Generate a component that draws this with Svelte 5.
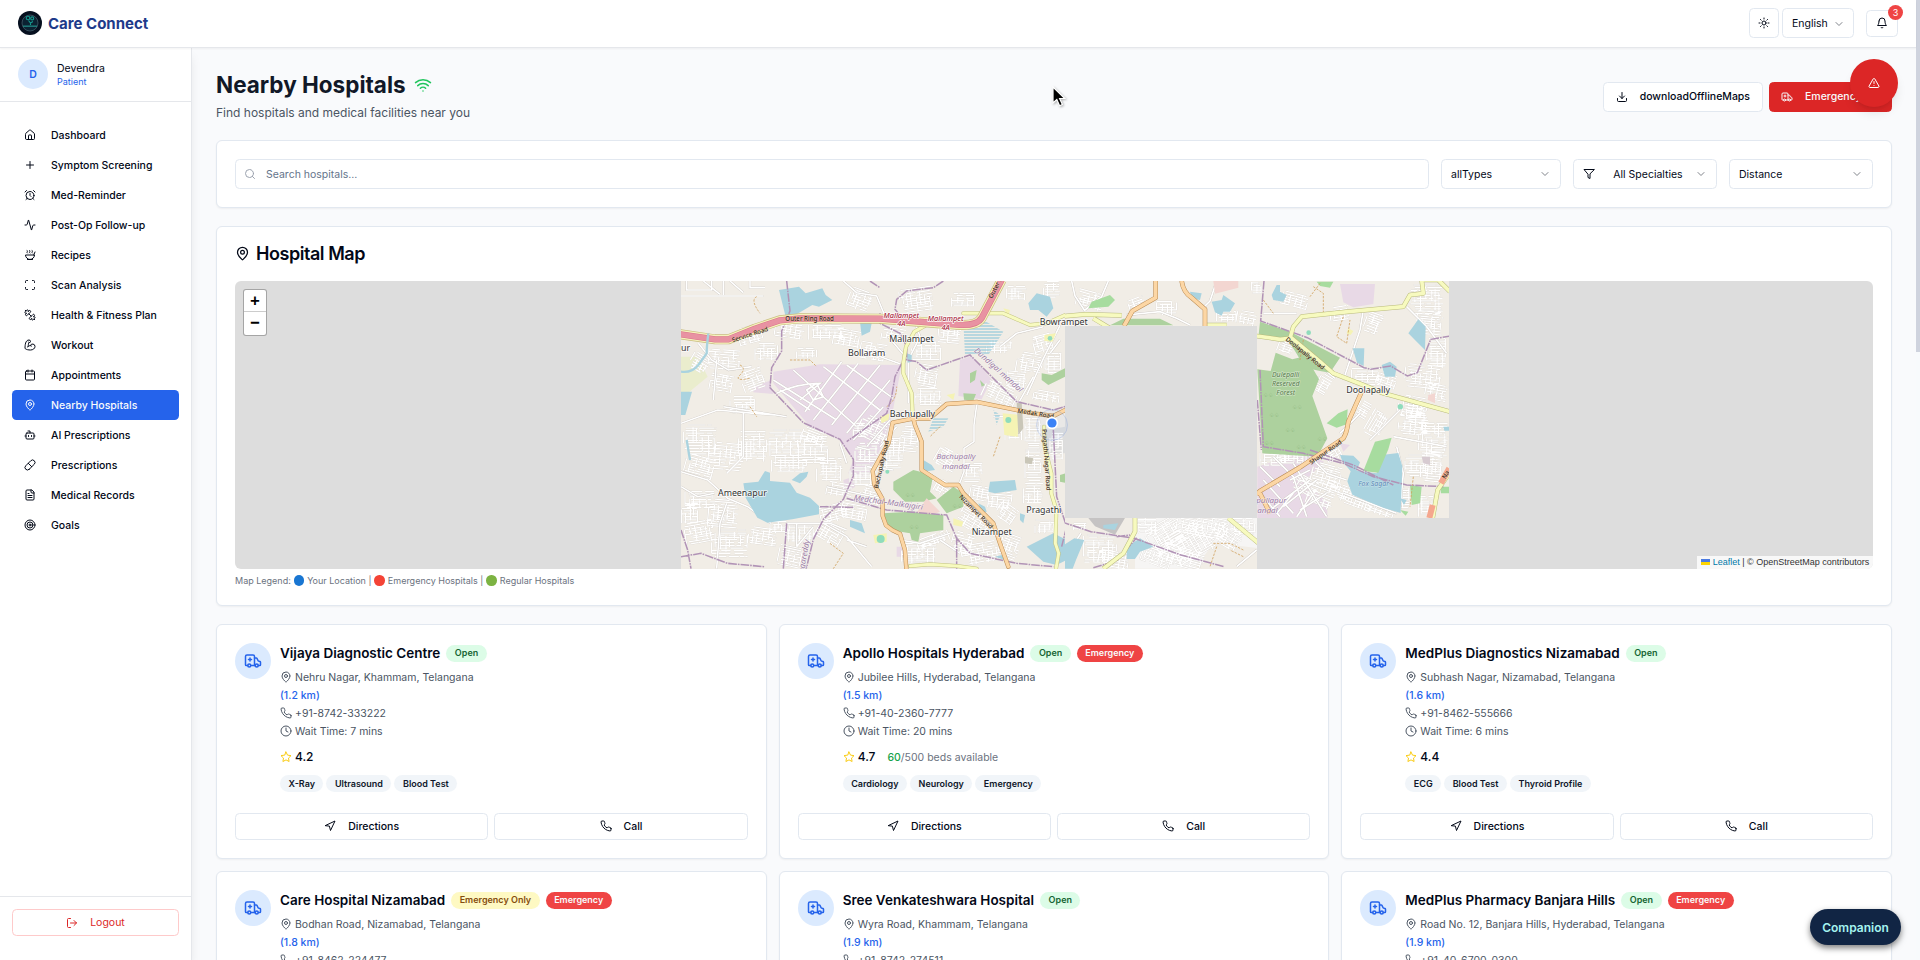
<script>
  const icons = {
    home: '<path d="M15 21v-8a1 1 0 0 0-1-1h-4a1 1 0 0 0-1 1v8"/><path d="M3 10a2 2 0 0 1 .709-1.528l7-5.999a2 2 0 0 1 2.582 0l7 5.999A2 2 0 0 1 21 10v9a2 2 0 0 1-2 2H5a2 2 0 0 1-2-2z"/>',
    plus: '<path d="M5 12h14M12 5v14"/>',
    alarm: '<circle cx="12" cy="13" r="8"/><path d="M12 9v4l2 2M5 3 2 6M22 6l-3-3M6.38 18.7 4 21M17.64 18.67 20 21"/>',
    activity: '<path d="M22 12h-2.48a2 2 0 0 0-1.93 1.46l-2.35 8.36a.25.25 0 0 1-.48 0L9.24 2.18a.25.25 0 0 0-.48 0l-2.35 8.36A2 2 0 0 1 4.49 12H2"/>',
    soup: '<path d="M12 21a9 9 0 0 0 9-9H3a9 9 0 0 0 9 9Z"/><path d="M7 21h10M19.5 12 22 6"/><path d="M16.25 3c.27.1.8.53.75 1.36-.06.83-.93 1.2-1 2.02-.05.78.34 1.24.73 1.62M11.25 3c.27.1.8.53.74 1.36-.05.83-.93 1.2-.98 2.02-.06.78.33 1.24.72 1.62M6.25 3c.27.1.8.53.75 1.36-.06.83-.93 1.2-1 2.02-.05.78.34 1.24.74 1.62"/>',
    scan: '<path d="M3 7V5a2 2 0 0 1 2-2h2M17 3h2a2 2 0 0 1 2 2v2M21 17v2a2 2 0 0 1-2 2h-2M7 21H5a2 2 0 0 1-2-2v-2"/>',
    dumbbell: '<path d="M14.4 14.4 9.6 9.6"/><path d="M18.657 21.485a2 2 0 1 1-2.829-2.828l-1.767 1.768a2 2 0 1 1-2.829-2.829l6.364-6.364a2 2 0 1 1 2.829 2.829l-1.768 1.767a2 2 0 1 1 2.828 2.829z"/><path d="m21.5 21.5-1.4-1.4M3.9 3.9 2.5 2.5"/><path d="M6.404 12.768a2 2 0 1 1-2.829-2.829l1.768-1.767a2 2 0 1 1-2.828-2.829l2.828-2.828a2 2 0 1 1 2.829 2.828l1.767-1.768a2 2 0 1 1 2.829 2.829z"/>',
    biceps: '<path d="M12.409 13.017A5 5 0 0 1 22 15c0 3.866-4 7-9 7-4.077 0-8.153-.82-10.371-2.462-.426-.316-.631-.832-.62-1.362C2.118 12.723 2.627 2 10 2a3 3 0 0 1 3 3 2 2 0 0 1-2 2c-1.105 0-1.64-.444-2-1"/><path d="M15 14a5 5 0 0 0-7.584 2M9.964 6.825C8.019 7.977 9.5 13 8 15"/>',
    calendar: '<path d="M8 2v4M16 2v4M3 10h18"/><rect x="3" y="4" width="18" height="18" rx="2"/>',
    pin: '<path d="M20 10c0 4.993-5.539 10.193-7.399 11.799a1 1 0 0 1-1.202 0C9.539 20.193 4 14.993 4 10a8 8 0 0 1 16 0"/><circle cx="12" cy="10" r="3"/>',
    bot: '<path d="M12 8V4H8"/><rect x="4" y="8" width="16" height="12" rx="2"/><path d="M2 14h2M20 14h2M15 13v2M9 13v2"/>',
    pill: '<path d="m10.5 20.5 10-10a4.95 4.95 0 1 0-7-7l-10 10a4.95 4.95 0 1 0 7 7Z"/><path d="m8.5 8.5 7 7"/>',
    file: '<path d="M15 2H6a2 2 0 0 0-2 2v16a2 2 0 0 0 2 2h12a2 2 0 0 0 2-2V7Z"/><path d="M14 2v4a2 2 0 0 0 2 2h4M10 9H8M16 13H8M16 17H8"/>',
    target: '<circle cx="12" cy="12" r="10"/><circle cx="12" cy="12" r="6"/><circle cx="12" cy="12" r="2"/>',
    logout: '<path d="M9 21H5a2 2 0 0 1-2-2V5a2 2 0 0 1 2-2h4"/><path d="m16 17 5-5-5-5M21 12H9"/>',
    sun: '<circle cx="12" cy="12" r="4"/><path d="M12 2v2M12 20v2M4.93 4.93l1.41 1.41M17.66 17.66l1.41 1.41M2 12h2M20 12h2M6.34 17.66l-1.41 1.41M19.07 4.93l-1.41 1.41"/>',
    chevron: '<path d="m6 9 6 6 6-6"/>',
    bell: '<path d="M6 8a6 6 0 0 1 12 0c0 7 3 9 3 9H3s3-2 3-9"/><path d="M10.3 21a1.94 1.94 0 0 0 3.4 0"/>',
    download: '<path d="M21 15v4a2 2 0 0 1-2 2H5a2 2 0 0 1-2-2v-4M7 10l5 5 5-5M12 15V3"/>',
    ambulance: '<path d="M10 10H6M8 8v4M9 18h6"/><path d="M14 18V6a2 2 0 0 0-2-2H4a2 2 0 0 0-2 2v11a1 1 0 0 0 1 1h2"/><path d="M19 18h2a1 1 0 0 0 1-1v-3.28a1 1 0 0 0-.684-.948l-1.923-.641a1 1 0 0 1-.578-.502l-1.539-3.076A1 1 0 0 0 16.382 8H14"/><circle cx="17" cy="18" r="2"/><circle cx="7" cy="18" r="2"/>',
    alert: '<path d="m21.73 18-8-14a2 2 0 0 0-3.48 0l-8 14A2 2 0 0 0 4 21h16a2 2 0 0 0 1.73-3"/><path d="M12 9v4M12 17h.01"/>',
    wifi: '<path d="M12 20h.01M2 8.82a15 15 0 0 1 20 0M5 12.859a10 10 0 0 1 14 0M8.5 16.429a5 5 0 0 1 7 0"/>',
    filter: '<path d="M22 3H2l8 9.46V19l4 2v-8.54z"/>',
    search: '<circle cx="11" cy="11" r="8"/><path d="m21 21-4.3-4.3"/>',
    nav: '<path d="M3 11 22 2l-9 19-2-8z"/>',
    phone: '<path d="M22 16.92v3a2 2 0 0 1-2.18 2 19.79 19.79 0 0 1-8.63-3.07 19.5 19.5 0 0 1-6-6 19.79 19.79 0 0 1-3.07-8.67A2 2 0 0 1 4.11 2h3a2 2 0 0 1 2 1.72 12.84 12.84 0 0 0 .7 2.81 2 2 0 0 1-.45 2.11L8.09 9.91a16 16 0 0 0 6 6l1.27-1.27a2 2 0 0 1 2.11-.45 12.84 12.84 0 0 0 2.81.7A2 2 0 0 1 22 16.92z"/>',
    clock: '<circle cx="12" cy="12" r="10"/><path d="M12 6v6l4 2"/>',
    star: '<path d="m12 2 3.09 6.26L22 9.27l-5 4.87 1.18 6.88L12 17.77l-6.18 3.25L7 14.14 2 9.27l6.91-1.01z"/>'
  };

  const menu = [
    ['home', 'Dashboard'], ['plus', 'Symptom Screening'], ['alarm', 'Med-Reminder'],
    ['activity', 'Post-Op Follow-up'], ['soup', 'Recipes'], ['scan', 'Scan Analysis'],
    ['dumbbell', 'Health & Fitness Plan'], ['biceps', 'Workout'], ['calendar', 'Appointments'],
    ['pin', 'Nearby Hospitals'], ['bot', 'AI Prescriptions'], ['pill', 'Prescriptions'],
    ['file', 'Medical Records'], ['target', 'Goals']
  ];

  const hospitals = [
    { name: 'Vijaya Diagnostic Centre', status: 'Open', address: 'Nehru Nagar, Khammam, Telangana', km: '1.2', phone: '+91-8742-333222', wait: 7, rating: '4.2', tags: ['X-Ray', 'Ultrasound', 'Blood Test'] },
    { name: 'Apollo Hospitals Hyderabad', status: 'Open', emergency: true, address: 'Jubilee Hills, Hyderabad, Telangana', km: '1.5', phone: '+91-40-2360-7777', wait: 20, rating: '4.7', beds: [60, 500], tags: ['Cardiology', 'Neurology', 'Emergency'] },
    { name: 'MedPlus Diagnostics Nizamabad', status: 'Open', address: 'Subhash Nagar, Nizamabad, Telangana', km: '1.6', phone: '+91-8462-555666', wait: 6, rating: '4.4', tags: ['ECG', 'Blood Test', 'Thyroid Profile'] },
    { name: 'Care Hospital Nizamabad', status: 'Emergency Only', emergency: true, address: 'Bodhan Road, Nizamabad, Telangana', km: '1.8', phone: '+91-8462-224477' },
    { name: 'Sree Venkateshwara Hospital', status: 'Open', address: 'Wyra Road, Khammam, Telangana', km: '1.9', phone: '+91-8742-274511' },
    { name: 'MedPlus Pharmacy Banjara Hills', status: 'Open', emergency: true, address: 'Road No. 12, Banjara Hills, Hyderabad, Telangana', km: '1.9', phone: '+91-40-6700-0300' }
  ];

  // Seeded generator, so that the street fabric is the same on every load
  let seed = 7;
  const rnd = () => ((seed = (seed * 16807) % 2147483647) / 2147483647);

  // A block of streets: parallel runs in two directions, of uneven lengths
  function block([cx, cy, w, h, deg]) {
    const a = (deg * Math.PI) / 180, c = Math.cos(a), s = Math.sin(a);
    const p = (x, y) => `${(cx + x * c - y * s).toFixed(1)} ${(cy + x * s + y * c).toFixed(1)}`;
    let d = '';
    for (let y = -h / 2; y < h / 2; y += 6 + rnd() * 3.5) {
      let x = -w / 2 + rnd() * w * 0.22;
      const end = w / 2 - rnd() * w * 0.15;
      while (x < end) {
        const e = Math.min(end, x + 14 + rnd() * 45);
        d += `M${p(x, y)}L${p(e, y)}`;
        x = e + rnd() * 12;
      }
    }
    for (let x = -w / 2; x < w / 2; x += 9 + rnd() * 11) {
      const y = -h / 2 + rnd() * h * 0.5;
      d += `M${p(x, y)}L${p(x, Math.min(h / 2, y + 20 + rnd() * h * 0.5))}`;
    }
    return d;
  }

  const westBlocks = [
    [330, 150, 90, 50, 8], [440, 155, 110, 50, 0], [130, 240, 110, 60, 4], [60, 250, 60, 50, 30], [260, 215, 70, 50, 0], [210, 165, 70, 50, -15],
    [125, 310, 70, 50, 10], [220, 300, 70, 60, -20], [190, 375, 80, 50, 0], [710, 60, 100, 70, -8], [540, 60, 70, 60, 20],
    [850, 60, 70, 40, 0], [640, 165, 70, 40, 10], [740, 210, 90, 60, 0], [580, 215, 80, 50, 10], [500, 175, 80, 50, 10], [740, 290, 70, 70, 10],
    [745, 350, 80, 50, 0], [810, 160, 70, 60, 5], [960, 200, 80, 40, 0], [960, 340, 100, 60, 25], [1010, 300, 60, 50, 5],
    [60, 480, 100, 90, 0], [140, 530, 110, 80, 5], [220, 500, 90, 90, 0], [320, 490, 120, 80, 0], [400, 510, 90, 80, 0],
    [60, 560, 90, 60, 15], [330, 550, 110, 50, 0], [450, 570, 80, 70, 0], [580, 450, 90, 70, 25], [560, 520, 70, 60, 0], [550, 585, 80, 60, 0],
    [60, 660, 90, 50, 0], [130, 700, 90, 80, 5], [60, 760, 90, 70, -10], [150, 790, 110, 80, 0], [250, 770, 90, 50, 8],
    [360, 760, 90, 50, 0], [330, 830, 70, 60, 12], [460, 700, 80, 50, -15], [450, 760, 80, 60, 30], [520, 690, 90, 50, 10], [570, 650, 60, 60, 15],
    [640, 520, 60, 90, 0], [690, 480, 60, 80, 5], [790, 625, 50, 40, 30], [740, 600, 50, 25, 20], [800, 540, 70, 60, 30], [880, 580, 60, 60, 0], [720, 820, 110, 60, 0], [760, 780, 100, 30, -20],
    [900, 640, 60, 40, 10], [960, 660, 70, 50, 5], [1060, 560, 50, 100, 0], [1060, 460, 50, 90, 0], [1130, 500, 40, 80, 0], [1060, 640, 60, 60, 0],
    [880, 720, 90, 60, 30], [850, 790, 70, 60, 15], [900, 820, 110, 60, -10], [980, 700, 60, 50, 35], [990, 800, 60, 70, 20], [1100, 740, 70, 40, 0],
    [1050, 250, 80, 60, 10], [1090, 190, 60, 50, -15], [1120, 250, 50, 60, 0], [1115, 30, 50, 50, 0], [1100, 350, 80, 30, 10], [1010, 40, 60, 40, 0], [1000, 460, 50, 40, 0],
    [480, 630, 80, 40, 10], [400, 470, 70, 40, 20], [540, 450, 40, 40, 0], [380, 220, 60, 30, 0], [30, 700, 50, 60, 0], [300, 740, 60, 30, 0]
  ].map(block).join('');

  const eastBlocks = [
    [90, 60, 80, 50, 15], [320, 85, 60, 40, 0], [230, 70, 50, 30, -20], [560, 115, 60, 40, 10], [500, 110, 60, 30, 0], [590, 20, 30, 40, 0],
    [700, 60, 90, 40, 15], [940, 130, 50, 60, 20], [1100, 60, 100, 90, 0], [1110, 130, 80, 70, 5], [1130, 220, 60, 90, 0], [920, 290, 90, 50, 0], [980, 300, 60, 40, 20],
    [790, 315, 40, 60, 30], [910, 390, 40, 50, 30], [950, 430, 80, 50, -60], [1060, 380, 90, 60, 10], [1130, 340, 70, 50, 10], [1060, 440, 90, 60, 5], [1120, 480, 90, 100, 0],
    [1070, 560, 70, 70, 0], [1120, 560, 60, 90, 5], [640, 535, 80, 50, 0], [700, 530, 80, 40, 0], [820, 520, 50, 40, -30], [800, 585, 90, 60, 15], [740, 620, 80, 50, 30], [780, 660, 80, 40, 20],
    [900, 660, 110, 50, 20], [960, 690, 90, 30, 20], [830, 630, 90, 40, 20], [1030, 650, 40, 70, 0], [1100, 680, 50, 60, 0], [680, 200, 50, 40, 20],
    [60, 740, 40, 20, 0], [120, 810, 100, 90, 0], [160, 840, 90, 50, 10], [260, 735, 70, 50, 0], [320, 770, 110, 90, -30], [390, 790, 130, 100, -30], [290, 830, 90, 50, 20], [430, 740, 160, 60, 10], [500, 770, 90, 60, 30], [370, 835, 130, 60, 15], [550, 740, 80, 50, 0],
    [1090, 290, 110, 70, 5], [1070, 400, 60, 60, 0], [840, 100, 60, 40, -8]
  ].map(block).join('');

  const westRoads = [
    'M3 48H250M20 3V30H95V3M70 3l50 40M130 3v42M210 3v20h45M150 3l40 35',
    'M490 3l40 35 60 10 25 60 15 20M700 110l20 60-35 70 0 130M625 170l60 70M560 215l110 40',
    'M55 190l40 50 50 30 70-10M110 240l-10 120M130 380l190 30M3 430l110-40 110 10 60 5M190 400v130l-50 50',
    'M3 575l80 25 60 55 60 25 70 50M140 670l-20 60-10 136M440 620l160 35M400 740l-50 60M430 730l70 40 75 90',
    'M1140 136l-50 100-50 110M1060 290l-45 80M890 375l-8 60 0 50-30 20 0 70-15 40M960 200l50-40 80-20M1110 220l30-40',
    'M560 560l80 10M500 780l60 20M900 760l40-30M320 730h130l50 20M350 730v70M780 780l60 40M660 780l60 10 90-30',
    'M1170 3l10 60 15 15M940 410l60 0M480 490l20 60M3 620l50 30 50-10'
  ].join('');

  const eastRoads = [
    'M35 3l10 45 30 45M75 90l50-40 20-47M200 105l100-10 50 20 40 20M470 3l-20 60-20 20',
    'M910 90l-10 60-50 150M620 130l60 60M1040 80l60 60 60 80M900 400l-60 60M1020 390l-90 90M1000 470l160 30M610 100h100',
    'M1010 500l20 80-10 110M850 640l160 60M3 850l60-90M530 860l60-50M740 520l60 60 60 20M735 265l30-20 60 50M735 265l40 30'
  ].join('');

  const estate = 'M280 300l190 120M340 270l190 170M430 260l170 130M500 255l140 100M375 395l110-150M400 420l135-170M455 435l145-180M500 460l130-160M300 330l90 60M290 340q60-30 130-30l-60 50M380 330l30-20 20 40-30 10zM520 480l90-100M560 500l70-80M600 500l50-60M530 500l40 10';
  const eastEstate = 'M600 560l60 60M630 690l120-90M640 530l60 60 40 120M700 550l100 160M610 600l90 100M720 600l80 30M650 700l50-60M760 640l-50 70M600 640l60 70M690 600l60-30M770 600l-100 80M720 690l80-50';

  const highway = 'M-5 162l110 16h40l80-32 75-25 60-6 240 1 230 18q60 5 75-20l60-114';
  const westYellow = 'M670 250l8-50 25-45 45-25M670 250v30l25 60 3 70M850 100h120l80 35 50-5 60-27 40 5M1092 440l2 60 20 80 0 60 15 50-3 100 10 30-8 46M690 858l60-5 80 5 60 8';
  const westOrange = 'M1160 388l-40 20-60-8-100-20-70-14-90 6-40 34-12 10h-50l-60 12-12 60-48 85 5 40 25 45 0 50 10 28 20 15 22 10 15 50 5 70M700 415l5 20 20 50 0 85 70 45 40 0 15 25 90 90 20 60 25 70';
  const eastYellow = 'M-5 110l80-7 110 3M100 115l50 30M440 135h60M590 168l70 10 30-3 10-35 25-30 140-15 165-15 20-35 40-5-5-40h50l35 35M690 170l90 75 40 35 90 35 60 25 200 55M225 705v50l-35 65-60 46M505 714l90 75M1168 580l-35 50-15 84';
  const eastOrange = 'M287 3v50l-70 40-25 45M365 3q5 35 30 50l40 35v50M905 335l-40 90q-5 35-15 50L720 562 600 633l-10 10M600 640l30 60';
</script>

{#snippet icon(name, size = 12)}
  <svg class="icon" viewBox="0 0 24 24" width={size} height={size} fill="none" stroke="currentColor" stroke-width="2" stroke-linecap="round" stroke-linejoin="round">{@html icons[name]}</svg>
{/snippet}

{#snippet line(d, casing, casingWidth, color, width)}
  <path {d} stroke={casing} stroke-width={casingWidth} />
  <path {d} stroke={color} stroke-width={width} />
{/snippet}

<div class="screen">
  <div class="app">
    <header>
      <svg class="logo" viewBox="0 0 24 24" width="24" height="24">
        <circle cx="12" cy="12" r="12" fill="#06101f" />
        <circle cx="12" cy="12" r="8" fill="#0b2232" stroke="#56707c" stroke-width=".6" />
        <g fill="none" stroke="#159a90" stroke-width="1.1"><circle cx="10" cy="7" r="1.8" /><circle cx="14.2" cy="7.4" r="1.5" /><path d="M10.5 9.5l2 2.5 2.4-1.5M12.5 12v2" /></g>
        <path d="M5 15.2h14" stroke="#2cb5a8" stroke-width="1.5" opacity=".6" />
      </svg>
      <span class="brand">Care Connect</span>
      <div class="tools">
        <button class="btn square">{@render icon('sun')}</button>
        <button class="btn lang">English<span class="faint">{@render icon('chevron')}</span></button>
        <button class="btn bell">{@render icon('bell')}<span class="count">3</span></button>
      </div>
    </header>

    <div class="body">
      <aside>
        <div class="user">
          <div class="initial">D</div>
          <div><div class="uname">Devendra</div><div class="role">Patient</div></div>
        </div>
        <nav>
          {#each menu as [ic, label]}
            <a class:active={label === 'Nearby Hospitals'}>{@render icon(ic)}<span>{label}</span></a>
          {/each}
        </nav>
        <div class="foot"><button class="logout">{@render icon('logout')}Logout</button></div>
      </aside>

      <main>
        <div class="heading">
          <div>
            <h1>Nearby Hospitals <span class="online">{@render icon('wifi', 18)}</span></h1>
            <p>Find hospitals and medical facilities near you</p>
          </div>
          <div class="actions">
            <button class="btn wide">{@render icon('download')}downloadOfflineMaps</button>
            <button class="btn wide danger">{@render icon('ambulance')}Emergency</button>
          </div>
        </div>

        <section class="card filters">
          <div class="field search"><span class="grey">{@render icon('search')}</span>Search hospitals...</div>
          <div class="field types">allTypes<span class="faint">{@render icon('chevron')}</span></div>
          <div class="field spec">{@render icon('filter')}<span class="chosen">All Specialties</span><span class="faint">{@render icon('chevron')}</span></div>
          <div class="field spec">Distance<span class="faint">{@render icon('chevron')}</span></div>
        </section>

        <section class="card map-card">
          <h2>{@render icon('pin', 15)}Hospital Map</h2>
          <div class="map">
            <svg class="tiles" viewBox="235 281 1638 288" width="1638" height="288">
              <defs>
                <clipPath id="west"><path d="M681 281h384v288H681z" /></clipPath>
                <clipPath id="east"><path d="M1065 281h384v237h-192v51h-192v-51h192v-192h-192z" /></clipPath>
                <pattern id="wetland" width="20" height="9" patternUnits="userSpaceOnUse"><path d="M0 3h20" stroke="#8fc7d9" stroke-width="3.5" /></pattern>
              </defs>

              <g clip-path="url(#west)">
                <g transform="translate(680 280) scale(.33333)">
                  <rect width="1160" height="900" fill="#f1ede6" />
                  <path d="M3 230h50l30 60-60 50H3z" fill="#eaedcd" />
                  <g fill="#e8d9e6">
                    <path d="M280 275l140-22 245 2-25 130-20 80-60 130-55-15 15-40-40-60-90-40-110-130z" /><path d="M220 320l50-18 10 40-60-5zM840 240l35-12 60 70-30 60-70-10zM490 600l30-10 5 30-30 20zM650 800h20v30h-20z" />
                  </g>
                  <path d="M1100 450l56-10v80h-56z" fill="#ddd" />
                  <g fill="none">
                    {@render line(westBlocks, '#d6d1cb', 5, '#fff', 3.7)}
                    {@render line(westRoads + estate, '#c9c4bf', 6.6, '#fff', 4.8)}
                  </g>
                  <g fill="#add19e">
                    <path d="M640 605l60-35 60 15-10 50 20 20-40 10-55 0-35-35zM770 660l50-40 30 20 0 40-50 20zM610 700l80-5 100 10 0 45-70 10-5 25-20-5-5-20-60-10z" />
                    <path d="M1085 280l30 5 40-20v25l-50 25-20-15zM850 340l38 2-8 20-28-3zM870 280l20-10-5 30-15 10zM900 300l15 15-10 5zM1140 585l20-6v30l-20-4z" />
                  </g>
                  <path d="M740 655l40 40-20 8-50-5z" fill="#f3d6d1" />
                  <g fill="#aad3df">
                    <path d="M297 30l60-10 20 20 50-15 10 20 20 15-40 20-20-5-60 35h-20z" /><path d="M190 610l45-5 20-32 15 5 0 25 60 5 20 30 40 15 27 25v25l-80 15-75 10-30-15-35-60z" />
                    <path d="M335 600l25-20 25-5-5 15-20 20zM510 720l35 10 10 30-45-20zM3 335h33l-20 70H3zM540 125l35 5-5 25-25 12zM1045 70l25-30 40 10 10 35-20 25-25-20-25 0z" />
                    <path d="M930 605l75-5 5 30-65 10-20-5zM1040 800l80-40 30 15 50 5 0 40-70 35-40-10zM730 540l25 15 10 15-35 5zM1020 700l15 5-5 25-10-10zM895 670l20 10 5 15-15 5zM680 220l15 5v20l-12 3zM945 830l20-5 10 15z" />
                  </g>
                  <path d="M850 125l60-5 60 35-45 70-70 0zM760 415l45 0-15 25-45 15zM940 390l20 15-10 30z" fill="url(#wetland)" />
                  <g fill="#f5f3b4"><path d="M968 400l50 5-5 65-40-5zM800 345l25-5-5 20zM970 85l20 5-5 20zM1093 165l35-5-10 25-25-2zM820 715l30 10-5 15-25-5zM580 765l40-5 0 25-35 5zM600 410l30-10-5 20-20 10z" /></g>
                  <g fill="#8fdcbc"><circle cx="985" cy="420" r="9" /><circle cx="602" cy="777" r="12" /><circle cx="1110" cy="175" r="7" /><circle cx="622" cy="575" r="6" /></g>
                  <path d="M1010 370l15-5 5 80-15 20zM1035 530l25 5-5 18-20-3z" fill="#c9c6b8" />
                  <path d="M180 255q20 10 0 30t30 10M330 240l60 0 20 20M210 380l20 30M620 380q30-20 30-60M780 440l-30 30M450 790l40 30-30 46M960 470l-20 60M230 50q-20 10 10 50" fill="none" stroke="#cf9f5a" stroke-width="2.4" stroke-dasharray="7 4" />

                  <g fill="none" stroke="#b193b6" stroke-width="4.6" stroke-dasharray="26 3 5 3">
                    <path d="M320 3l10 90-25 60 0 60-30 50-5 60 100 105 110 50 40 60 0 50-30 70-60 60-30 60-35 145" />
                    <path d="M570 3l30 20M790 3l-30 20-80 10-30 25-5 30 20 25M600 100v30l60 30 20 40v40l30 5 30 25 130-45 90 90 50 50 110 25 50-15" />
                    <path d="M665 250l-20 40-10 60-15 50-120 85M500 655l120 35 180 15 30 70 40 45 140 30 110 10M1120 450l10 200 30 90-15 60M3 750l20 60 10 56M3 830l60-10 80 30 110 10M320 730l-10 136M420 680l100 2M830 770v96" />
                  </g>

                  <g fill="none" stroke-linecap="round" stroke-linejoin="round">
                    {@render line(westYellow, '#c2c280', 12, '#f7fabf', 9)}
                    {@render line(westOrange, '#b98a52', 13, '#fcd6a4', 10)}
                    <g stroke-linecap="butt">
                      {@render line(highway, '#c9bd7e', 30, '#f5f3bd', 26)}
                      {@render line(highway, '#d9748a', 19, '#e892a2', 16)}
                    </g>
                  </g>
                  <path d="M85 160q-5 40-5 60l-25 35q-20 25-52 20M20 480l10 60" fill="none" stroke="#aad3df" stroke-width="7" />

                  <g class="road">
                    <text x="316" y="124">Outer Ring Road</text>
                    <text transform="translate(158 187) rotate(-18)">Service Road</text>
                    <text transform="translate(936 56) rotate(-62)">Outer Ring</text>
                    <text transform="translate(1012 398) rotate(9)">Medak Road</text>
                    <text transform="translate(1087 448) rotate(86)">Pragathi Nagar Road</text>
                    <text transform="translate(594 626) rotate(-77)">Bachupally Road</text>
                    <text transform="translate(836 652) rotate(45)">Nizampet Road</text>
                  </g>
                  <g class="place">
                    <text x="628" y="187">Mallampet</text><text x="504" y="229">Bollaram</text><text x="1079" y="136">Bowramp</text><text x="629" y="411">Bachupally</text>
                    <text x="114" y="648">Ameenapur</text><text x="1039" y="700">Pragathi</text><text x="875" y="764">Nizampet</text><text x="-13" y="213">pur</text>
                  </g>
                  <g class="exit"><text x="664" y="113">Mallampet</text><text x="664" y="139">4A</text><text x="797" y="124">Mallampet</text><text x="797" y="149">4A</text></g>
                  <g class="district">
                    <text x="828" y="538">Bachupally</text><text x="828" y="567">mandal</text>
                    <text transform="translate(950 276) rotate(42)">Dundigal mandal</text>
                    <text transform="translate(624 675) rotate(8)">Medchal–Malkajgiri</text>
                    <text transform="translate(380 830) rotate(-80)">ngareddy</text>
                  </g>
                  <g class="trees"><text x="676" y="650">♤♤</text><text x="686" y="746">♤♤</text><text x="815" y="684">♤♤</text></g>
                </g>
              </g>

              <g clip-path="url(#east)">
                <g transform="translate(1060 280) scale(.33333)">
                  <rect width="1200" height="900" fill="#f1ede6" />
                  <path d="M225 714h367v90l-130-15-60 77H225z" fill="#f6f5f4" />
                  <g fill="#e8d9e6"><path d="M840 12h105l-5 60-60 10-30-15zM592 560l140-45 60 30-60 60 70 60 0 49H592zM840 490l30 5-20 20z" /></g>
                  <g fill="none">
                    {@render line(eastBlocks, '#d6d1cb', 5, '#fff', 3.7)}
                    {@render line(eastRoads + eastEstate, '#c9c4bf', 7, '#fff', 5)}
                  </g>
                  <g fill="#add19e"><path d="M150 136l40-20 110 0 40 20z" /><path d="M600 125l90 30 150 78-30 45-30-5-45-10-30-50-20-30-90-10z" /><path d="M592 268l40 5 15-55 50 20 40-10 40 70-20 50 45 127-30 55-165-10z" /></g>
                  <g fill="#a7dc9f"><path d="M95 65l55-20 15 15-20 20-60 5zM800 430l35-30 28-12-3 45-30 10zM770 5l50 0-10 18-30-5zM1050 615l35 5-5 50-25 5zM1140 620l28 0v20l-25 0zM1020 690l25 5-8 12z" /></g>
                  <path d="M460 3h75l0 20-70 18zM1105 345l20-5v30l-22-10z" fill="#f3d6d1" />
                  <g fill="#aad3df">
                    <path d="M455 65l30-5 5-15 35 25-15 25-20 0-5 12-20-10zM390 35l35 5-5 20-25-5zM635 45l15-30 10 0 0 20 20 10-10 20-30-5zM878 205l35 0-2 53-20-10zM965 255l25-10 20 15-5 30-30 0zM1045 160l30-42 22 22-2 70-30-30z" />
                    <path d="M840 525l40 2 20 20-10 25 60 8 15-55 50-6 12 40-5 140-50-15-50-20-45-20-15-40 10-30-25-30zM1020 655l20 5-8 15zM3 800l40-25 30 5-25 60-10 26H3zM200 800l40-25 40 25-40 15-15 22h-25zM1150 440h18v12h-15z" />
                  </g>
                  <path d="M945 485l50-12-10 35-30 70-45-5z" fill="#a7dc9f" />
                  <path d="M85 714h110l-30 50-60-25z" fill="#c5c3c3" /><path d="M130 735l45-5-10 20-35-5z" fill="#aad3df" /><path d="M1085 530l25 0 0 25-20-5z" fill="#d7cbd1" />
                  <g fill="#8fdcbc"><circle cx="746" cy="158" r="7" /><circle cx="1021" cy="380" r="8" /></g>
                  <path d="M865 145l15 8-8 12-12-5z" fill="#f5f3b4" />
                  <path d="M760 20l30 20 0 60M780 10l-30 40M850 110l-20 60 30 20 10-70M730 180l-10 60M1060 590l-10 90M460 790l50 0 40 20M470 800l-20 60M610 60l30 40M550 830l-40-20" fill="none" stroke="#cf9f5a" stroke-width="2.4" stroke-dasharray="7 4" />
                  <g fill="none" stroke="#b193b6" stroke-width="4.6" stroke-dasharray="26 3 5 3">
                    <path d="M612 3l-10 120 140 50 170 90 20 5 60-10 50 30 30-10 40-100 60-10M600 270l10 230 120 20 120 30 90 40 100 25 110 5M3 725l90 30 130 20 140 50 130 35M170 770l40-5M750 510l130 45 120 60" />
                    <path d="M592 360l12 150M100 863l70-20 60-70" />
                  </g>
                  <g fill="none" stroke-linejoin="round">
                    {@render line(eastYellow, '#b9ba7c', 14, '#f7fabf', 11)}
                    {@render line(eastOrange, '#b98a52', 14, '#fcd6a4', 11)}
                    <path d="M1168 565l-25 45M1118 675l-10 39" stroke="#f5a78e" stroke-width="18" />
                  </g>
                  <g class="road">
                    <text transform="translate(676 180) rotate(39)">Doolapally Road</text><text transform="translate(754 554) rotate(-35)">Shapur Road</text><text transform="translate(1156 598) rotate(-58)">Na</text>
                  </g>
                  <g class="place"><text x="859" y="338">Doolapally</text><text x="3" y="136">ampet</text></g>
                  <g class="district"><text x="634" y="670">pullapur</text><text x="612" y="699">mandal</text></g>
                  <g class="forest"><text x="677" y="290">Dulepalli</text><text x="677" y="317">Reserved</text><text x="677" y="344">Forest</text></g>
                  <text class="water" x="941" y="619">Fox Sagar</text>
                  <g class="trees"><text x="610" y="352">♤♤</text><text x="696" y="386">♤♤</text><text x="628" y="412">♤♤</text><text x="675" y="457">♤♤</text><text x="772" y="484">♤♤</text><text x="612" y="494">♤♤</text><text x="708" y="508">♤♤</text></g>
                </g>
              </g>
              <circle cx="1052" cy="425" r="15.5" fill="#3b82f6" fill-opacity=".04" stroke="#6b8fe0" stroke-opacity=".25" />
              <circle cx="1052" cy="423" r="6.2" fill="#fff" />
              <circle cx="1052" cy="423" r="4.6" fill="#3b82f6" />
            </svg>
            <div class="zoom"><span>+</span><span>−</span></div>
            <div class="credit"><i></i><b>Leaflet</b> | © OpenStreetMap contributors</div>
          </div>
          <div class="legend">Map Legend: <i class="blue"></i> Your Location | <i class="red"></i> Emergency Hospitals | <i class="green"></i> Regular Hospitals</div>
        </section>

        <div class="grid">
          {#each hospitals as h}
            <article class="card hospital">
              <div class="info">
                <div class="badge-icon">{@render icon('ambulance', 18)}</div>
                <div>
                  <div class="title"><h3>{h.name}</h3><span class="pill {h.status === 'Open' ? 'open' : 'only'}">{h.status}</span>{#if h.emergency}<span class="pill emergency">Emergency</span>{/if}</div>
                  <div class="line">{@render icon('pin')}{h.address}</div>
                  <div class="line km">({h.km} km)</div>
                  <div class="line">{@render icon('phone')}{h.phone}</div>
                  {#if h.rating}
                    <div class="line">{@render icon('clock')}Wait Time: {h.wait} mins</div>
                    <div class="rating"><span class="gold">{@render icon('star')}</span><strong>{h.rating}</strong>{#if h.beds}<span class="beds"><b>{h.beds[0]}</b>/{h.beds[1]} beds available</span>{/if}</div>
                    <div class="tags">{#each h.tags as t}<span class="pill tag">{t}</span>{/each}</div>
                  {/if}
                </div>
              </div>
              {#if h.rating}
                <div class="buttons">
                  <button class="btn">{@render icon('nav')}Directions</button>
                  <button class="btn">{@render icon('phone')}Call</button>
                </div>
              {/if}
            </article>
          {/each}
        </div>
      </main>
    </div>
  </div>
  <div class="scrollbar"><div></div></div>

  <button class="fab">{@render icon('alert')}</button>
  <button class="companion">Companion</button>
  <svg class="cursor" viewBox="0 0 14 22" width="14" height="22"><path d="M1 1v16l3.8-3.4 2.8 6.2 2.8-1.3-2.8-6h5.2z" fill="#000" stroke="#fff" stroke-width="1.2" /></svg>
</div>

<style>
  :global(body) { margin: 0; overflow: hidden; }
  :global(*) { box-sizing: border-box; }
  .screen { position: relative; display: flex; width: 1920px; height: 960px; overflow: hidden; background: #f9fafc; color: #020817; font: 10.5px/15px Inter, sans-serif; }
  .app { width: 1916px; display: flex; flex-direction: column; }
  .icon { display: block; flex: none; }
  button { font: inherit; color: inherit; margin: 0; }
  h1, h2, h3, p { margin: 0; }

  header { height: 48px; flex: none; display: flex; align-items: center; padding: 0 18px; border-bottom: 1px solid #e5e7eb; background: #fff; position: relative; z-index: 2; box-shadow: 0 1px 2px rgba(0, 0, 0, .05); }
  .logo { margin-top: -1px; }
  .brand { margin-left: 6px; font-size: 15px; font-weight: 700; line-height: 21px; color: #1e3a8a; }
  .tools { margin-left: auto; display: flex; align-items: center; padding-bottom: 1px; }
  .btn { display: flex; align-items: center; justify-content: center; gap: 12px; border: 1px solid #e2e8f0; border-radius: 4.5px; background: #fff; font-weight: 500; padding: 0; }
  .square { width: 30px; height: 30px; }
  .lang { width: 72px; height: 30px; margin: 0 12px 0 3px; font-weight: 400; justify-content: flex-start; gap: 5px; padding: 1px 9px 0; }
  .faint { opacity: .5; }
  .bell { position: relative; width: 32px; height: 27px; }
  .count { position: absolute; right: -6px; top: -6px; width: 15px; height: 15px; border-radius: 50%; background: #ef4444; color: #fff; font-size: 9px; line-height: 15px; font-weight: 400; }

  .body { flex: 1; display: flex; min-height: 0; }
  aside { width: 192px; margin-top: -1px; flex: none; display: flex; flex-direction: column; background: #fff; border-right: 1px solid #e5e7eb; box-shadow: 0 7.5px 11px -2px rgba(0, 0, 0, .1); }
  .user { height: 55px; display: flex; align-items: center; gap: 9px; padding: 0 18px; border-bottom: 1px solid #e5e7eb; }
  .initial { width: 30px; height: 30px; border-radius: 50%; background: #dbeafe; color: #2563eb; font-weight: 600; text-align: center; line-height: 31px; }
  .uname { line-height: 15px; }
  .role { font-size: 9px; line-height: 12px; color: #2563eb; }
  nav { flex: 1; padding: 18px 12px; }
  nav a { display: flex; align-items: center; gap: 15px; height: 30px; padding: 0 12px; border-radius: 4.5px; font-weight: 500; }
  nav a.active { background: #2563eb; color: #f8fafc; }
  .foot { height: 64px; border-top: 1px solid #e5e7eb; padding: 12px; }
  .logout { display: flex; align-items: center; justify-content: center; gap: 12px; width: 100%; height: 27px; border: 1px solid #fecaca; border-radius: 4.5px; background: #fff; color: #dc2626; font-weight: 400; }

  main { flex: 1; padding: 24px 24px 0; overflow: hidden; }
  .heading { display: flex; align-items: center; justify-content: space-between; height: 49.5px; }
  h1 { display: flex; align-items: center; gap: 8px; margin-top: -1px; font-size: 22.5px; line-height: 27px; font-weight: 700; color: #111827; }
  .online { color: #22c55e; }
  .heading p { margin-top: 5.5px; font-size: 12px; line-height: 18px; color: #4b5563; }
  .actions { display: flex; gap: 6px; }
  .wide { height: 30px; padding: 0 12px; }
  .danger { background: #dc2626; border-color: #dc2626; color: #f8fafc; width: 123px; justify-content: flex-start; padding: 0 11px; }

  .card { background: #fff; border: 1px solid #e2e8f0; border-radius: 6px; box-shadow: 0 1px 2px rgba(0, 0, 0, .05); }
  .filters { margin-top: 18px; display: flex; gap: 12px; padding: 18px; }
  .field { display: flex; align-items: center; justify-content: space-between; height: 30px; border: 1px solid #e2e8f0; border-radius: 4.5px; padding: 1px 9px 0; }
  .search { flex: 1; justify-content: flex-start; gap: 10px; padding-left: 8px; color: #64748b; }
  .grey { color: #9ca3af; }
  .types { width: 120px; }
  .spec { width: 144px; }
  .chosen { margin-left: 6px; }

  .map-card { margin-top: 18px; height: 380px; padding: 18px; }
  h2 { display: flex; align-items: center; gap: 6px; height: 18px; font-size: 18px; line-height: 18px; font-weight: 600; letter-spacing: -.45px; }
  .map { position: relative; margin-top: 18px; height: 288px; border-radius: 6px; background: #ddd; overflow: hidden; }
  .tiles { display: block; font-family: "Noto Sans", sans-serif; }
  .tiles text { paint-order: stroke; stroke-linejoin: round; }
  .place text { font-size: 26.5px; fill: #333; stroke: #fff; stroke-opacity: .75; stroke-width: 5px; }
  .road text { font-size: 18.5px; font-weight: 500; fill: #33261a; stroke: #f7e3bd; stroke-opacity: .5; stroke-width: 2px; }
  .exit text { font-size: 22px; font-style: italic; font-weight: 500; fill: #a81f3d; text-anchor: middle; stroke: #fff; stroke-width: 4px; }
  .district text { font-size: 24px; font-style: italic; fill: #9a7aa5; text-anchor: middle; stroke: #fff; stroke-opacity: .6; stroke-width: 3px; }
  .forest text { font-size: 21px; font-style: italic; fill: #587a4c; text-anchor: middle; stroke: #e4f0df; stroke-opacity: .6; stroke-width: 4px; }
  .water { font-size: 21px; font-style: italic; fill: #5b88b5; text-anchor: middle; stroke: #fff; stroke-opacity: .4; stroke-width: 3px; }
  .trees text { font-size: 17px; fill: #7fae72; }
  .zoom { position: absolute; left: 8px; top: 8px; width: 24px; border: 1px solid rgba(0, 0, 0, .25); border-radius: 3px; background: #fff; font: 700 16.5px/23px "Liberation Mono", monospace; text-align: center; color: #000; background-clip: padding-box; }
  .zoom span { display: block; height: 22.5px; }
  .zoom span:first-child { border-bottom: 1px solid #ccc; }
  .credit { position: absolute; right: 0; bottom: 0; height: 13px; padding: 0 3.75px; background: rgba(255, 255, 255, .8); font: 9px/13px "Liberation Sans", sans-serif; color: #333; white-space: nowrap; }
  .credit i { display: inline-block; width: 9px; height: 6px; margin-right: 3px; background: linear-gradient(#4c7be1 50%, #ffd500 50%); }
  .credit b { font-weight: 400; color: #0078a8; }
  .legend { margin-top: 6px; font-size: 9px; line-height: 12px; color: #6b7280; }
  .legend i { display: inline-block; width: 10.4px; height: 10.4px; border-radius: 50%; vertical-align: -2px; margin: 0 .5px; }
  .blue { background: #1976d2; }
  .red { background: #f44336; }
  .green { background: #7cb342; }

  .grid { margin-top: 18px; display: grid; grid-template-columns: repeat(3, 1fr); gap: 12px; }
  .hospital { height: 235px; padding: 18px; }
  .info { display: flex; gap: 9px; height: 148.5px; }
  .badge-icon { width: 36px; height: 36px; flex: none; display: flex; align-items: center; justify-content: center; border-radius: 50%; background: #dbeafe; color: #2563eb; }
  .title { display: flex; align-items: center; gap: 6px; height: 21px; margin-bottom: 6px; }
  h3 { font-size: 13.5px; line-height: 21px; font-weight: 600; }
  .pill { display: inline-flex; align-items: center; height: 17px; padding: 0 8.5px; border-radius: 9px; font-size: 9px; line-height: 12px; font-weight: 600; }
  .open { background: #dcfce7; color: #166534; }
  .only { background: #fef9c3; color: #854d0e; }
  .emergency { background: #ef4444; color: #f8fafc; }
  .tag { background: #f1f5f9; color: #0f172a; }
  .line { display: flex; align-items: center; gap: 3px; height: 15px; margin-bottom: 3px; color: #4b5563; }
  .km { color: #2563eb; font-weight: 500; }
  .rating { display: flex; align-items: center; gap: 3px; height: 18px; margin-top: 9px; }
  .rating strong { font-size: 12px; font-weight: 500; }
  .gold { color: #facc15; }
  .beds { margin-left: 9px; padding-top: 1px; color: #6b7280; }
  .beds b { color: #16a34a; font-weight: 500; }
  .tags { display: flex; gap: 3px; margin-top: 9px; }
  .tag { padding-top: 1px; }
  .buttons { display: flex; gap: 6px; margin-top: 21.5px; }
  .buttons .btn { flex: 1; height: 27px; }

  .scrollbar { width: 4px; background: #f8fafc; }
  .scrollbar div { height: 352px; background: #cfd3de; }
  .fab { position: absolute; z-index: 3; left: 1850px; top: 59px; width: 48px; height: 48px; padding: 0; border: 0; border-radius: 50%; background: #dc2626; color: #fff; display: flex; align-items: center; justify-content: center; box-shadow: 0 7.5px 11px -2px rgba(0, 0, 0, .1), 0 3px 4.5px -3px rgba(0, 0, 0, .1); }
  .companion { position: absolute; z-index: 3; left: 1810px; top: 909px; width: 91px; height: 36px; padding: 0; border: 0; border-radius: 18px; background: #112544; color: #a5f3f0; font-size: 12px; font-weight: 600; box-shadow: 0 3px 6px rgba(0, 0, 0, .5); }
  .cursor { position: absolute; z-index: 4; left: 1052px; top: 86px; filter: drop-shadow(1px 1px 1px rgba(0, 0, 0, .3)); }
</style>
